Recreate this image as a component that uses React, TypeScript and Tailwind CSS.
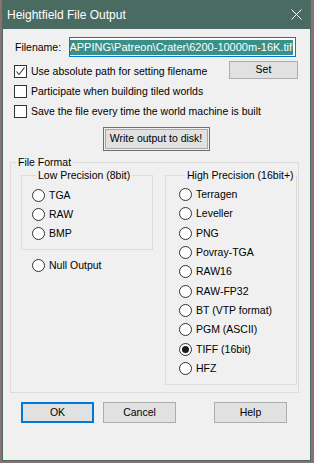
import React from "react";

const font = "font-['Liberation_Sans',Arial,sans-serif]";

function CheckBox({ checked, label }: { checked?: boolean; label: string }) {
  return (
    <div className="flex items-center">
      <span className="flex h-[13px] w-[13px] items-center justify-center border border-[#333] bg-white">
        {checked && (
          <svg width="11" height="11" viewBox="0 0 11 11">
            <polyline points="1.5,5.5 4,8.5 9.5,1.5" fill="none" stroke="#333" strokeWidth="1.1" />
          </svg>
        )}
      </span>
      <span className="ml-[4px] text-[10.5px] leading-[13px] text-black">{label}</span>
    </div>
  );
}

function Radio({ label, checked, h }: { label: string; checked?: boolean; h: string }) {
  return (
    <div className={`flex items-center ${h}`}>
      <span className="flex h-[13px] w-[13px] items-center justify-center rounded-full border border-[#333] bg-white">
        {checked && <span className="h-[7px] w-[7px] rounded-full bg-[#1a1a1a]" />}
      </span>
      <span className="ml-[4px] text-[10.5px] leading-[13px] text-black">{label}</span>
    </div>
  );
}

const lowFormats = ["TGA", "RAW", "BMP"];
const highFormats = [
  "Terragen",
  "Leveller",
  "PNG",
  "Povray-TGA",
  "RAW16",
  "RAW-FP32",
  "BT (VTP format)",
  "PGM (ASCII)",
  "TIFF (16bit)",
  "HFZ",
];

export default function App() {
  return (
    <div className={`h-[463px] w-[314px] overflow-hidden bg-[#8b7070] pl-[2px] ${font}`}>
      <div className="flex h-[461px] w-[309px] flex-col border-x border-b border-[#4a6b61] bg-[#f0f0f0]">
        {/* title bar */}
        <div className="flex h-[29px] shrink-0 items-center justify-between bg-[#4a6b61] pl-[4px] pr-[8px]">
          <span className="text-[12px] leading-[14px] text-white">Heightfield File Output</span>
          <svg width="11" height="11" viewBox="0 0 11 11">
            <path d="M0.5 0.5 L10.5 10.5 M10.5 0.5 L0.5 10.5" stroke="white" strokeWidth="1" />
          </svg>
        </div>

        {/* filename */}
        <div className="mt-[8px] flex h-[20px] items-center pl-[12px]">
          <span className="w-[54px] text-[10.5px] leading-[13px] text-black">Filename:</span>
          <div className="flex h-[20px] w-[227px] items-center justify-end overflow-hidden border border-[#0078d7] bg-white pr-[2px]">
            <span className="whitespace-nowrap bg-[#3b8f89] px-[1px] text-[11px] leading-[15px] text-white">
              MAPPING\Patreon\Crater\6200-10000m-16K.tif
            </span>
          </div>
        </div>

        {/* options */}
        <div className="mt-[4px] flex h-[18px] items-center justify-between pl-[11px] pr-[12px]">
          <div className="pt-[3px]">
            <CheckBox checked label="Use absolute path for setting filename" />
          </div>
          <button className="flex h-[18px] w-[69px] items-center justify-center border border-[#adadad] bg-[#e1e1e1] text-[10.5px] text-black">
            Set
          </button>
        </div>
        <div className="mt-[2px] flex h-[20px] items-center pl-[11px]">
          <CheckBox label="Participate when building tiled worlds" />
        </div>
        <div className="flex h-[20px] items-center pl-[11px]">
          <CheckBox label="Save the file every time the world machine is built" />
        </div>

        <div className="mt-[6px] flex justify-center pl-[1px]">
          <div className="ml-[-2px] flex h-[24px] w-[107px] border border-[#6e6e6e] bg-[#f0f0f0] p-[1px]">
            <div className="flex flex-1 items-center justify-center border border-[#a8a8a8] bg-[#e1e1e1] text-[10.5px] text-black">
              Write output to disk!
            </div>
          </div>
        </div>

        {/* file format group */}
        <fieldset className="ml-[7px] mt-[5px] w-[289px] border border-[#dcdcdc] pb-[7px]">
          <legend className="ml-[5px] px-[2px] text-[10.5px] leading-[13px] text-black">File Format</legend>
          <div className="flex items-start pl-[10px]">
            <div className="flex flex-col">
              <fieldset className="w-[132px] border border-[#dcdcdc] pb-[6px] pl-[10px] pt-[4px]">
                <legend className="ml-[4px] px-[2px] text-[10.5px] leading-[13px] text-black">Low Precision (8bit)</legend>
                {lowFormats.map((f) => (
                  <Radio key={f} label={f} h="h-[19px]" />
                ))}
              </fieldset>
              <div className="mt-[6px] pl-[11px]">
                <Radio label="Null Output" h="h-[19px]" />
              </div>
            </div>
            <fieldset className="ml-[12px] w-[132px] border border-[#dcdcdc] pb-[6px] pl-[13px] pt-[3px]">
              <legend className="ml-[6px] px-[2px] text-[10.5px] leading-[13px] text-black">High Precision (16bit+)</legend>
              {highFormats.map((f) => (
                <Radio key={f} label={f} checked={f === "TIFF (16bit)"} h="h-[19.3px]" />
              ))}
            </fieldset>
          </div>
        </fieldset>

        {/* dialog buttons */}
        <div className="mt-[9px] flex pl-[18px]">
          <button className="flex h-[21px] w-[73px] items-center justify-center border-2 border-[#0078d7] bg-[#e1e1e1] text-[10.5px] text-black">
            OK
          </button>
          <button className="ml-[9px] flex h-[21px] w-[73px] items-center justify-center border border-[#adadad] bg-[#e1e1e1] text-[10.5px] text-black">
            Cancel
          </button>
          <button className="ml-[38px] flex h-[21px] w-[73px] items-center justify-center border border-[#adadad] bg-[#e1e1e1] text-[10.5px] text-black">
            Help
          </button>
        </div>
      </div>
    </div>
  );
}
